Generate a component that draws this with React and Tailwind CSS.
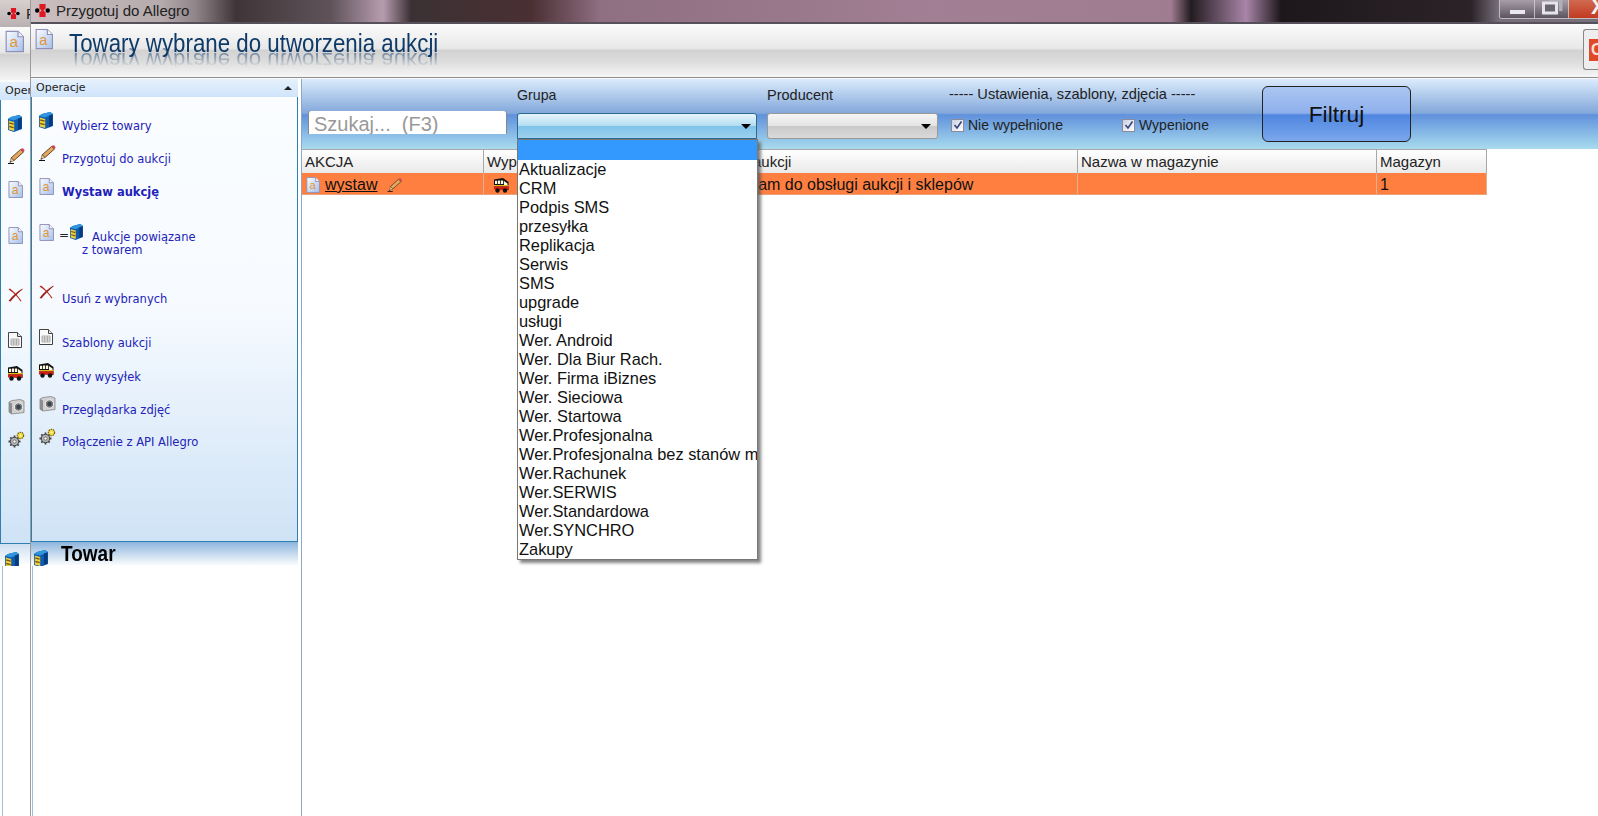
const GROUPS = [
  'Aktualizacje', 'CRM', 'Podpis SMS', 'przesyłka', 'Replikacja', 'Serwis', 'SMS', 'upgrade', 'usługi',
  'Wer. Android', 'Wer. Dla Biur Rach.', 'Wer. Firma iBiznes', 'Wer. Sieciowa', 'Wer. Startowa',
  'Wer.Profesjonalna', 'Wer.Profesjonalna bez stanów magazynowych', 'Wer.Rachunek', 'Wer.SERWIS',
  'Wer.Standardowa', 'Wer.SYNCHRO', 'Zakupy',
]

function DocA({ className = 'h-[17px] w-[15px]' }) {
  return (
    <svg viewBox="0 0 16 18" className={`${className} shrink-0`}>
      <defs>
        <linearGradient id="docfill" x1="0" y1="0" x2="1" y2="1">
          <stop offset="0" stopColor="#fbfcff" />
          <stop offset="1" stopColor="#a4c0ea" />
        </linearGradient>
      </defs>
      <path d="M1 .5h10l4.5 4.5v12.5h-14.500z" fill="url(#docfill)" stroke="#8f8fb8" strokeWidth="1" />
      <path d="M11 .5v4.500h4.500" fill="#f4f4fa" stroke="#8f8fb8" strokeWidth="1" />
      <text x="7.5" y="14" textAnchor="middle" fontSize="13" fontFamily="Liberation Sans" fill="#e0963a">a</text>
    </svg>
  )
}

function Cabinet({ className = 'h-[17px] w-[14px]' }) {
  return (
    <svg viewBox="0 0 14 17" className={`${className} shrink-0`}>
      <path d="M3 2l8-2 3 2v12l-8 3-6-2V4z" fill="#0d5cae" />
      <path d="M0 4l6 1.5 8-3.500-3-2-8 2z" fill="#2f95dd" />
      <path d="M.8 5.5l5.400 1.500v9l-5.400-1.500z" fill="#f2d040" />
      <path d="M1.2 8l4.600 1.200M1.200 11.500l4.600 1.200" stroke="#7a5c0c" strokeWidth="1.300" />
      <path d="M10 3.500l3.500-1v11l-3.500 1.500z" fill="#083a80" />
    </svg>
  )
}

function Pencil({ className = 'h-[16px] w-[17px]' }) {
  return (
    <svg viewBox="0 0 17 16" className={`${className} shrink-0`}>
      <path d="M0 15.5h6" stroke="#111" strokeWidth="1" />
      <path d="M12.5 1.5l3 2.500-9.500 8.500-3-2.500z" fill="#e2a860" stroke="#5a3a18" strokeWidth=".9" />
      <path d="M3 10l3 2.500-4.200 2z" fill="#ecd3ae" stroke="#5a3a18" strokeWidth=".5" />
      <path d="M2.800 13l-1 1.500 1.800-.8z" fill="#111" />
      <path d="M12.500 1.500l3 2.500 1.200-1.400-1.700-2.400-1.500.4z" fill="#d2405c" />
    </svg>
  )
}

function RedX({ className = 'h-[14px] w-[15px]' }) {
  return (
    <svg viewBox="0 0 15 14" className={`${className} shrink-0`}>
      <path d="M.5 1.5c5 3 9 7 12 12l1-.5C10 8 6 3.500 2 .5z" fill="#b8281f" />
      <path d="M14.500.5C9 3.500 4.500 8 .5 13l2 .5C6 9 10 5 14.500 1.500z" fill="#9c1f1a" />
    </svg>
  )
}

function TableDoc({ className = 'h-[16px] w-[14px]' }) {
  return (
    <svg viewBox="0 0 14 16" className={`${className} shrink-0`}>
      <path d="M.5.5h9l4 4v11h-13z" fill="#fafafa" stroke="#444" strokeWidth="1" />
      <path d="M9.500.5v4h4" fill="#e5e5e5" stroke="#444" strokeWidth="1" />
      <path d="M3 7h8v6h-8zM3 9h8M3 11h8M5.700 7v6M8.400 7v6" fill="none" stroke="#999" strokeWidth=".8" />
    </svg>
  )
}

function Bus({ className = 'h-[15px] w-[15px]' }) {
  return (
    <svg viewBox="0 0 15 15" className={`${className} shrink-0`}>
      <path d="M0 1.500l9-1.500 5.500 4v8l-14.500-1z" fill="#111" />
      <path d="M1 2.800h2.200v3.200h-2.200zM4 2.600h2.200v3.400h-2.200zM7 2.400h2.200v3.600h-2.200z" fill="#fff8e0" />
      <path d="M10 3l3.500 2.500v2h-3.500z" fill="#fff8e0" />
      <path d="M0 7h14.500v1.500h-14.500z" fill="#e8b820" />
      <path d="M0 8.500h14.500v3h-14.500z" fill="#d81e14" />
      <circle cx="3.500" cy="12.500" r="2.200" fill="#111" />
      <circle cx="11" cy="12.500" r="2.200" fill="#111" />
    </svg>
  )
}

function Camera({ className = 'h-[16px] w-[17px]' }) {
  return (
    <svg viewBox="0 0 17 16" className={`${className} shrink-0`}>
      <path d="M1 3l3-1.500 8-1 4 1.500v11.500l-12 1.500-3-2z" fill="#d0d0d0" stroke="#777" strokeWidth=".7" />
      <path d="M1 3l3 1.500v11l-3-2z" fill="#8d8d8d" />
      <circle cx="10.500" cy="8" r="4.200" fill="#7a7a7a" stroke="#f0f0f0" strokeWidth="1" />
      <circle cx="10.500" cy="8" r="2.200" fill="#39424e" />
    </svg>
  )
}

function Gears({ className = 'h-[17px] w-[17px]' }) {
  return (
    <svg viewBox="0 0 17 17" className={`${className} shrink-0`}>
      <path d="M6.500 4.500v12M.5 10.500h12M2.300 6.300l8.400 8.400M10.700 6.300l-8.400 8.400" stroke="#444" strokeWidth="1.800" />
      <circle cx="6.500" cy="10.500" r="4.200" fill="#b4b4b4" stroke="#444" strokeWidth="1" />
      <circle cx="6.500" cy="10.500" r="1.600" fill="#fff" stroke="#555" strokeWidth=".7" />
      <circle cx="12.500" cy="4.500" r="3.200" fill="#f0da40" stroke="#6a5a10" strokeWidth="1.100" strokeDasharray="1.500 .8" />
      <circle cx="12.500" cy="4.500" r="1" fill="#fff8c0" />
    </svg>
  )
}

function Logo({ className = 'h-[15px] w-[15px]' }) {
  return (
    <svg viewBox="0 0 17 15" className={`${className} shrink-0`}>
      <path d="M5 0h7v6.500h-7zM5 8.500h7v6.500h-7z" fill="#e01822" />
      <path d="M7 5h3v5h-3z" fill="#e01822" />
      <circle cx="2.500" cy="7.500" r="2.500" fill="#000" />
      <circle cx="14.500" cy="7.500" r="2.500" fill="#000" />
    </svg>
  )
}

function IconStack() {
  return (
    <span className="flex w-max items-start">
      <DocA />
      <span className="ml-[5px] mt-[5px] text-[12px] leading-[12px] text-[#222]">=</span>
      <Cabinet className="ml-[1px] h-[16px] w-[13px]" />
    </span>
  )
}

// tops of the icons in the side panel are irregular, so each row has its own height
const OPERATIONS = [
  { icon: <Cabinet />, strip: <Cabinet />, label: 'Wybierz towary', row: 'h-[33px]' },
  { icon: <Pencil />, strip: <Pencil />, label: 'Przygotuj do aukcji', row: 'h-[33px]' },
  { icon: <DocA />, strip: <DocA />, label: 'Wystaw aukcję', row: 'h-[46px]', bold: true },
  { icon: <IconStack />, strip: <DocA />, label: 'Aukcje powiązane', second: 'z towarem', row: 'h-[61px]', stack: true },
  { icon: <RedX />, strip: <RedX />, label: 'Usuń z wybranych', row: 'h-[44px]' },
  { icon: <TableDoc />, strip: <TableDoc />, label: 'Szablony aukcji', row: 'h-[34px]' },
  { icon: <Bus />, strip: <Bus />, label: 'Ceny wysyłek', row: 'h-[33px]' },
  { icon: <Camera />, strip: <Camera />, label: 'Przeglądarka zdjęć', row: 'h-[32px]' },
  { icon: <Gears />, strip: <Gears />, label: 'Połączenie z API Allegro', row: 'h-[33px]' },
]

function BackStrip() {
  return (
    <div className="flex h-full w-[30px] shrink-0 flex-col overflow-hidden">
      <div className="flex h-[27px] shrink-0 items-start bg-[linear-gradient(180deg,#d8cfcf,#b9b0b2)] pl-[6px] pt-[8px]">
        <Logo className="h-[11px] w-[15px]" />
        <span className="ml-[5px] text-[15px] leading-[12px] text-[#222]">P</span>
      </div>
      <div className="flex h-[53px] shrink-0 bg-[linear-gradient(180deg,#fbfbfb_0%,#e6e6e6_48%,#d2d2d2_52%,#f4f4f4_100%)] pl-[5px] pt-[3px]">
        <DocA className="h-[23px] w-[19px]" />
      </div>
      <div className="h-[2px] shrink-0 bg-[#fafafa]" />
      <div className="flex h-[18px] shrink-0 items-center bg-[linear-gradient(180deg,#e6f1fd,#cfe4fb)] pl-[5px] font-['DejaVu_Sans',sans-serif] text-[11px] text-[#222]">
        Oper
      </div>
      <div className="flex h-[444px] shrink-0 flex-col border-b border-l border-[#2f7fb0] bg-[linear-gradient(180deg,#fbfdff_0%,#f5faff_50%,#cfe3f6_100%)] pl-[7px] pt-[15px]">
        {OPERATIONS.map((item) => (
          <div key={item.label} className={`${item.row} shrink-0`}>
            {item.strip}
          </div>
        ))}
      </div>
      <div className="flex h-[22px] shrink-0 bg-[linear-gradient(180deg,#cfe0f2,#ffffff)] pl-[5px] pt-[8px]">
        <Cabinet />
      </div>
      <div className="ml-[2px] flex-1 border-l border-[#9cc0dc] bg-white" />
    </div>
  )
}

function TitleBar() {
  return (
    <div className="flex h-[22px] shrink-0 bg-[linear-gradient(90deg,#cbbfc1_0,#b5aaac_130px,#8f8487_165px,#3f3538_205px,#5f5359_300px,#b79cb0_352px,#3b3134_380px,#4a2f33_500px,#8f6f82_570px,#a27f94_900px,#a07c90_1140px,#231c20_1160px,#a985a8_1215px,#1d171b_1250px,#2b2328_1440px,#77707a_1468px)]">
      <div className="flex items-start pl-[4px] pt-[3px]">
        <Logo />
        <span className="ml-[6px] text-[15px] leading-[15px] text-[#222]">Przygotuj do Allegro</span>
      </div>
      <div className="ml-auto flex h-[19px] overflow-hidden rounded-bl-[3px] border-b border-l border-[#ddd]/70">
        <div className="flex w-[35px] items-end justify-center border-r border-[#ddd]/70 bg-[linear-gradient(180deg,#a89ea8,#5c5560)] pb-[4px]">
          <span className="h-[4px] w-[15px] bg-[#e8e8ee]" />
        </div>
        <div className="flex w-[34px] items-start justify-center border-r border-[#ddd]/70 bg-[linear-gradient(180deg,#a89ea8,#5c5560)]">
          <svg viewBox="0 0 24 18" className="h-[18px] w-[24px]">
            <path d="M9 0v1h10v10h3.500V0z" fill="#b0aeb6" />
            <rect x="3.500" y="3" width="13" height="10" fill="#6a6470" stroke="#e4e4ea" strokeWidth="3" />
          </svg>
        </div>
        <div className="w-[29px] overflow-hidden bg-[linear-gradient(180deg,#d06a50,#c13a20)] pl-[22px] text-[22px] font-bold leading-[14px] text-[#f2f2f2]">
          X
        </div>
      </div>
    </div>
  )
}

function Heading() {
  return (
    <div className="relative flex h-[54px] shrink-0 overflow-hidden border-b border-[#8e8e8e] bg-[linear-gradient(180deg,#fbfbfb_0%,#e8e8e8_46%,#d2d2d2_50%,#dcdcdc_70%,#f6f6f6_100%)] pl-[4px] pt-[4px]">
      <DocA className="h-[22px] w-[18px]" />
      <div className="relative ml-[16px] mt-[2px]">
        <span className="block origin-top scale-y-115 whitespace-nowrap text-[22.3px] leading-[24px] text-[#0e3a68]">Towary wybrane do utworzenia aukcji</span>
        <span className="absolute left-0 top-[18px] block -scale-y-100 whitespace-nowrap text-[22.3px] leading-[24px] text-[#0e3a68] opacity-50 [mask-image:linear-gradient(180deg,transparent_20%,black_80%)]">
          Towary wybrane do utworzenia aukcji
        </span>
      </div>
      <div className="ml-auto mt-[1px] flex h-[41px] w-[15px] items-center rounded-l-[3px] border border-r-0 border-[#888] bg-[#eeeeee] pl-[5px]">
        <span className="flex h-[22px] w-[10px] items-center overflow-hidden bg-[#de4a28] pl-[2px] text-[16px] font-bold leading-none text-[#f6e0d8]">
          O
        </span>
      </div>
    </div>
  )
}

function Sidebar() {
  return (
    <div className="flex w-[271px] shrink-0 flex-col border-r border-[#8ba9c6]">
      <div className="flex h-[463px] w-[267px] shrink-0 flex-col border-x border-b border-[#2f7fb0] bg-[linear-gradient(180deg,#fbfdff_0%,#f6faff_50%,#cfe3f6_100%)]">
        <div className="mx-[-1px] flex h-[18px] shrink-0 items-center justify-between bg-[linear-gradient(180deg,#e6f1fd,#cfe4fb)] pl-[5px] pr-[6px] font-['DejaVu_Sans',sans-serif] text-[11px] text-[#222]">
          <span>Operacje</span>
          <span className="h-0 w-0 border-x-[4px] border-b-[4px] border-x-transparent border-b-[#222]" />
        </div>
        <div className="pt-[15px]">
          {OPERATIONS.map((item) => (
            <div key={item.label} className={`flex ${item.row} shrink-0 font-['DejaVu_Sans',sans-serif] text-[11.5px] leading-[13px] text-[#2222b8]`}>
              <div className="w-[7px] shrink-0" />
              <div className="w-[23px] shrink-0">{item.icon}</div>
              {item.stack ? (
                <div className="ml-[30px] pt-[7px]">
                  <div>{item.label}</div>
                  <div className="ml-[-10px]">{item.second}</div>
                </div>
              ) : (
                <div className={`pt-[8px] ${item.bold ? 'font-bold' : ''}`}>{item.label}</div>
              )}
            </div>
          ))}
        </div>
      </div>
      <div className="flex h-[24px] w-[267px] shrink-0 bg-[linear-gradient(180deg,#8db6dd,#ffffff)] pl-[3px] pt-[8px]">
        <Cabinet />
        <span className="ml-[13px] mt-[-9px] origin-top scale-y-120 text-[19px] font-bold leading-[22px] text-black">Towar</span>
      </div>
      <div className="ml-[1px] flex-1 border-l border-[#9cc0dc] bg-white" />
    </div>
  )
}

function ComboArrow() {
  return <span className="h-0 w-0 border-x-[5px] border-t-[5px] border-x-transparent border-t-black" />
}

function FilterBar() {
  return (
    <div className="flex h-[70px] shrink-0 bg-[linear-gradient(180deg,#dbebfc_0%,#82a7da_49%,#6091dc_51%,#a9dcee_100%)] pl-[6px]">
      <div className="mt-[32px] h-[23px] w-[199px] shrink-0 overflow-hidden rounded-t-[3px] border-x border-[#888] bg-white pl-[5px] text-[20px] leading-[26px] text-[#999]">
        Szukaj... &nbsp;(F3)
      </div>
      <div className="ml-[10px] flex w-[240px] shrink-0 flex-col">
        <span className="mt-[8px] h-[26px] text-[14.2px] leading-[17px] text-[#222]">Grupa</span>
        <div className="flex h-[26px] items-center justify-end rounded-t-[3px] border border-[#2c6a8e] bg-[linear-gradient(180deg,#e6f5fc_0%,#b3def1_48%,#80c3ea_52%,#9dd1ee_100%)] pr-[5px]">
          <ComboArrow />
        </div>
      </div>
      <div className="ml-[10px] flex w-[171px] shrink-0 flex-col">
        <span className="mt-[8px] h-[26px] text-[14.5px] leading-[17px] text-[#222]">Producent</span>
        <div className="flex h-[26px] items-center justify-end rounded-[3px] border border-[#999] bg-[linear-gradient(180deg,#f5f5f5_0%,#e4e4e4_48%,#c9c9c9_52%,#dadada_100%)] pr-[6px]">
          <ComboArrow />
        </div>
      </div>
      <div className="ml-[11px] w-[300px] shrink-0">
        <div className="mt-[7px] h-[26px] whitespace-nowrap text-[14.6px] leading-[16px] text-[#222]">----- Ustawienia, szablony, zdjęcia -----</div>
        <div className="ml-[2px] mt-[5px] flex items-center text-[14px] leading-[16px] text-[#222]">
          <CheckMark />
          <span className="ml-[4px] w-[154px]">Nie wypełnione</span>
          <CheckMark />
          <span className="ml-[4px]">Wypenione</span>
        </div>
      </div>
      <button className="ml-[13px] mt-[7px] h-[56px] w-[149px] shrink-0 rounded-[6px] border border-[#222] bg-[linear-gradient(180deg,#a9c5f1_0%,#8fb0ec_48%,#4f86e0_52%,#7ba8ec_100%)] text-[22.7px] leading-[54px] text-[#111]">
        Filtruj
      </button>
    </div>
  )
}

function CheckMark() {
  return (
    <span className="flex h-[13px] w-[13px] shrink-0 items-center justify-center border border-[#8a8a9a] bg-[linear-gradient(135deg,#c8d0e0,#ffffff)]">
      <svg viewBox="0 0 10 10" className="h-[10px] w-[10px]">
        <path d="M1.5 5l2.500 3 4.500-6.500" fill="none" stroke="#37427a" strokeWidth="1.600" />
      </svg>
    </span>
  )
}

function GridTable() {
  const headCell = 'h-full shrink-0 border-r border-[#a8a8a8] pl-[3px] text-[15px] leading-[24px] text-[#222]'
  const rowCell = 'flex h-full shrink-0 items-center border-r border-[#e0b090] pt-[3px] text-[#111]'
  return (
    <div className="w-[1185px]">
      <div className="flex h-[24px] border-t border-[#a8a8a8] bg-[linear-gradient(180deg,#ffffff,#e9e9e9)]">
        <div className={`${headCell} w-[182px]`}>AKCJA</div>
        <div className={`${headCell} w-[216px]`}>Wypełniona</div>
        <div className={`${headCell} w-[378px]`}>Nazwa aukcji</div>
        <div className={`${headCell} w-[299px]`}>Nazwa w magazynie</div>
        <div className={`${headCell} w-[110px]`}>Magazyn</div>
      </div>
      <div className="flex h-[22px] border-b border-[#e7a27c] bg-[#ff7f40] text-[16px]">
        <div className={`${rowCell} w-[182px] pl-[4px]`}>
          <DocA className="h-[16px] w-[14px]" />
          <span className="ml-[5px] underline">wystaw</span>
          <Pencil className="ml-[10px] h-[14px] w-[16px]" />
        </div>
        <div className={`${rowCell} w-[216px] pl-[10px]`}>
          <Bus />
        </div>
        <div className={`${rowCell} w-[378px] pl-[19px]`}>Program do obsługi aukcji i sklepów</div>
        <div className={`${rowCell} w-[299px]`} />
        <div className={`${rowCell} w-[110px] pl-[3px]`}>1</div>
      </div>
    </div>
  )
}

function GroupMenu() {
  return (
    <div className="absolute left-[215px] top-[60px] w-[241px] border border-[#777] bg-white text-[16.4px] leading-[19px] text-[#111] shadow-[3px_3px_3px_rgba(80,80,80,0.7)]">
      <div className="h-[20px] bg-[#3399ff]" />
      {GROUPS.map((name) => (
        <div key={name} className="h-[19px] overflow-hidden whitespace-nowrap pl-[1px]">
          {name}
        </div>
      ))}
    </div>
  )
}

export default function App() {
  return (
    <div className="flex h-[816px] w-[1598px] overflow-hidden bg-white font-['Liberation_Sans',Arial,sans-serif]">
      <BackStrip />
      <div className="flex min-w-0 flex-1 flex-col border-l border-[#9a9a9a]">
        <TitleBar />
        <div className="h-[2px] shrink-0 bg-[#55505a]" />
        <Heading />
        <div className="h-[1px] shrink-0 bg-[#fafafa]" />
        <div className="flex min-h-0 flex-1">
          <Sidebar />
          <div className="relative min-w-0 flex-1">
            <FilterBar />
            <GridTable />
            <GroupMenu />
          </div>
        </div>
      </div>
    </div>
  )
}
